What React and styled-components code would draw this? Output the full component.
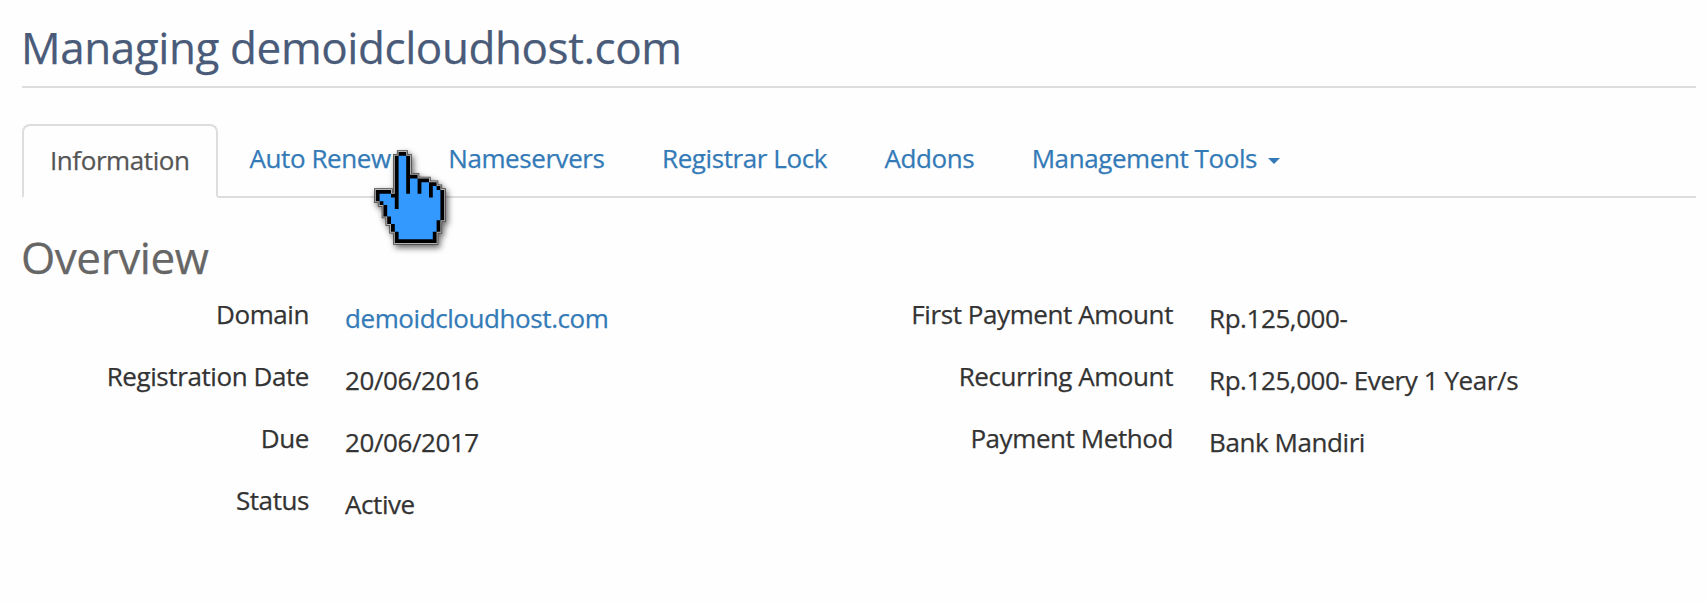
import React from "react";
import styled, { createGlobalStyle } from "styled-components";

const tabs = [
  { label: "Information", active: true },
  { label: "Auto Renew" },
  { label: "Nameservers" },
  { label: "Registrar Lock" },
  { label: "Addons" },
  { label: "Management Tools", dropdown: true }
];

const domainDetails = [
  { label: "Domain", value: "demoidcloudhost.com", link: true },
  { label: "Registration Date", value: "20/06/2016" },
  { label: "Due", value: "20/06/2017" },
  { label: "Status", value: "Active" }
];

const billingDetails = [
  { label: "First Payment Amount", value: "Rp.125,000-" },
  { label: "Recurring Amount", value: "Rp.125,000- Every 1 Year/s" },
  { label: "Payment Method", value: "Bank Mandiri" }
];

const HAND =
  "M6 0H8V1H9V6H11V7H14V8H16V9H17V10H18V18H17V21H16V24H5V21H4V19H3V17H2V14H1V13H0V10H4V11H5V1H6Z";
const HAND_FILL =
  "M6 1H8V11H9V7H11V11H12V8H14V12H15V9H16V10H17V18H16V21H15V23H6V21H5V19H4V17H3V14H2V13H1V11H4V12H5V15H6Z";

const Details = ({ items }) => (
  <Column>
    {items.map(({ label, value, link }) => (
      <Row key={label}>
        <Label>{label}</Label>
        <Value>{link ? <Link href="#">{value}</Link> : value}</Value>
      </Row>
    ))}
  </Column>
);

const App = () => (
  <>
    <GlobalStyle />
    <Page>
      <Title>Managing demoidcloudhost.com</Title>
      <Tabs>
        {tabs.map(({ label, active, dropdown }) => (
          <Tab key={label} href="#" $active={active}>
            {label}
            {dropdown && <Caret />}
          </Tab>
        ))}
      </Tabs>
      <Heading>Overview</Heading>
      <Columns>
        <Details items={domainDetails} />
        <Details items={billingDetails} />
      </Columns>
      <Pointer viewBox="-1 -1 20 26">
        <path d={HAND} stroke="#444" strokeWidth="0.9" />
        <path d={HAND} stroke="#b5b5b5" strokeWidth="0.5" />
        <path d={HAND} />
        <path d={HAND_FILL} fill="#3399ff" />
      </Pointer>
    </Page>
  </>
);

export default App;

const GlobalStyle = createGlobalStyle`
  body {
    margin: 0;
    background: #fefefe;
    color: #333;
    font-family: "Open Sans", sans-serif;
    font-size: 26px;
    line-height: 36px;
    letter-spacing: -0.42px;
    -webkit-text-stroke: 0.25px;
  }
`;
const Page = styled.div`
  position: relative;
  box-sizing: border-box;
  height: 604px;
  padding: 17px 10px 0 21px;
  overflow: hidden;
`;
const Title = styled.h1`
  margin: 0 0 36px 1px;
  padding-bottom: 9px;
  border-bottom: 2px solid #ddd;
  color: #495b79;
  font-size: 44px;
  font-weight: 400;
  line-height: 60px;
  letter-spacing: -0.41px;
  text-indent: -1px;
`;
const Tabs = styled.nav`
  display: flex;
  height: 72px;
  margin-left: 1px;
  border-bottom: 2px solid #ddd;
`;
const Tab = styled.a`
  display: flex;
  align-items: center;
  box-sizing: border-box;
  height: 74px;
  margin-right: 4px;
  padding: ${({ $active }) => ($active ? "0 26px 2px" : "0 23.5px 6px 26px")};
  border: 2px solid ${({ $active }) => ($active ? "#ddd" : "transparent")};
  border-bottom-color: ${({ $active }) => ($active ? "#fefefe" : "transparent")};
  border-radius: 8px 8px 0 0;
  background: ${({ $active }) => ($active ? "#fefefe" : "transparent")};
  color: ${({ $active }) => ($active ? "#555" : "#337ab7")};
  text-decoration: none;
  white-space: nowrap;
`;
const Caret = styled.span`
  margin: 5px 0 0 11px;
  border-top: 6px solid;
  border-right: 6px solid transparent;
  border-left: 6px solid transparent;
`;
const Heading = styled.h2`
  margin: 29px 0 9px;
  color: #666;
  font-size: 44px;
  font-weight: 400;
  line-height: 60px;
`;
const Columns = styled.div`
  display: flex;
  padding-left: 1px;
`;
const Column = styled.dl`
  flex: none;
  width: 864px;
  margin: 0;
`;
const Row = styled.div`
  display: flex;
  height: 62px;
`;
const Label = styled.dt`
  width: 287px;
  margin-right: 36px;
  text-align: right;
`;
const Value = styled.dd`
  margin: 4px 0 0;
  white-space: nowrap;
`;
const Link = styled.a`
  color: #337ab7;
  text-decoration: none;
`;
const Pointer = styled.svg`
  position: absolute;
  top: 148px;
  left: 372px;
  width: 76px;
  height: 99px;
  filter: drop-shadow(2px 3px 3px rgba(0, 0, 0, 0.6));
`;
